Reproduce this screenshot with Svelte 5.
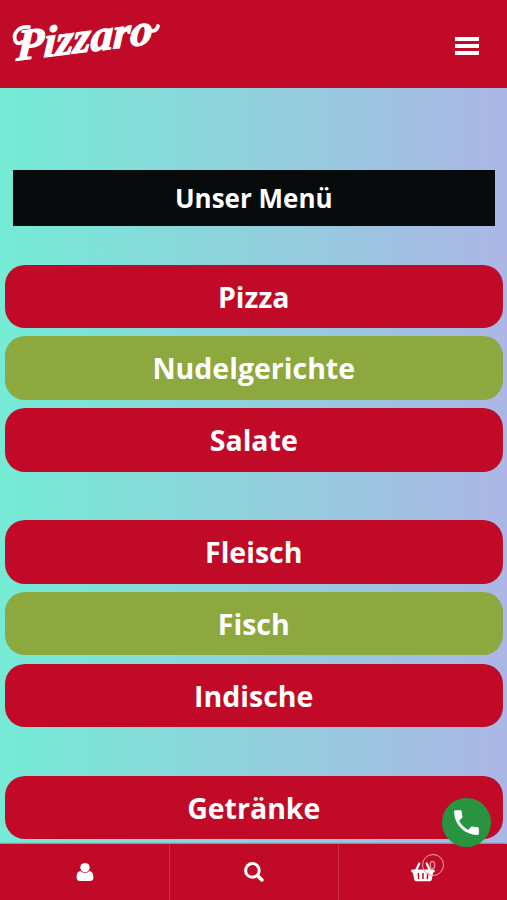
<script lang="ts">
	interface MenuItem {
		label: string;
		tone: 'red' | 'green';
	}

	const groups: MenuItem[][] = [
		[
			{ label: 'Pizza', tone: 'red' },
			{ label: 'Nudelgerichte', tone: 'green' },
			{ label: 'Salate', tone: 'red' }
		],
		[
			{ label: 'Fleisch', tone: 'red' },
			{ label: 'Fisch', tone: 'green' },
			{ label: 'Indische', tone: 'red' }
		],
		[{ label: 'Getränke', tone: 'red' }]
	];

	let cartCount = $state(0);
</script>

<div class="page">
	<header class="header">
		<a class="logo" href="#home" aria-label="Pizzaro">
			<svg width="154" height="56" viewBox="0 0 154 56">
				<text class="logo__text" transform="translate(7 50.500) rotate(-7) skewX(-10)" textLength="137" lengthAdjust="spacingAndGlyphs">Pizzaro</text>
				<path class="logo__swash" d="M20 17C10 16 4 23 6 30c1.500 4 5 4 7 2" />
				<path class="logo__swash" d="M141 20c4 2 7 0 8-4" />
			</svg>
		</a>
		<button class="menu-toggle" aria-label="Menu">
			<span></span>
			<span></span>
			<span></span>
		</button>
	</header>

	<main class="content">
		<h1 class="title">Unser Menü</h1>
		{#each groups as group}
			<nav class="group">
				{#each group as item}
					<a class="item item--{item.tone}" href="#menu">{item.label}</a>
				{/each}
			</nav>
		{/each}
	</main>

	<a class="call" href="#call" aria-label="Call">
		<svg width="33" height="33" viewBox="0 0 24 24" fill="#fff">
			<path d="M6.62 10.79c1.44 2.83 3.76 5.14 6.59 6.59l2.2-2.2c.27-.27.67-.36 1.02-.24 1.12.37 2.33.57 3.57.57.55 0 1 .45 1 1V20c0 .55-.45 1-1 1-9.39 0-17-7.61-17-17 0-.55.45-1 1-1h3.5c.55 0 1 .45 1 1 0 1.25.2 2.45.57 3.57.11.35.03.74-.25 1.02l-2.2 2.2z" />
		</svg>
	</a>

	<footer class="tabbar">
		<a class="tab" href="#account" aria-label="Account">
			<svg width="18" height="20" viewBox="0 0 18 20" fill="#fff">
				<circle cx="9" cy="5.6" r="4.7" />
				<path d="M4.6 8.9C1.6 9.2.6 12 .6 15.500c0 2.300 1.300 3.500 3.200 3.500h10.400c1.900 0 3.200-1.200 3.200-3.500 0-3.500-1-6.300-4-6.600-1.200 1.200-2.700 1.900-4.400 1.900s-3.200-.7-4.400-1.900z" />
			</svg>
		</a>
		<a class="tab" href="#search" aria-label="Search">
			<svg width="20" height="20" viewBox="0 0 20 20" fill="none" stroke="#fff">
				<circle cx="8.400" cy="8.400" r="6.800" stroke-width="3" />
				<path d="M13.400 13.400l4.500 4.500" stroke-width="3.600" stroke-linecap="round" />
			</svg>
		</a>
		<a class="tab" href="#cart" aria-label="Cart">
			<span class="cart">
				<svg width="24" height="20" viewBox="0 0 24 20">
					<path d="M4.800 9L8.300 1.500M19.200 9L15.700 1.500" stroke="#fff" stroke-width="2.200" stroke-linecap="round" />
					<path d="M1.300 7.500h21.400c1.500 0 1.500 3 0 3h-.5l-1.500 7.300c-.2.900-.8 1.400-1.700 1.400H5c-.9 0-1.500-.5-1.700-1.400L1.800 10.500h-.5c-1.500 0-1.500-3 0-3z" fill="#fff" />
					<path d="M7.300 11.500l.4 5M12 11.500v5M16.700 11.500l-.4 5" stroke="#c00a27" stroke-width="1.500" stroke-linecap="round" />
				</svg>
				<span class="cart__count">{cartCount}</span>
			</span>
		</a>
	</footer>
</div>

<style>
	:global(body) {
		margin: 0;
	}
	.page {
		position: relative;
		height: 900px;
		overflow: hidden;
		display: flex;
		flex-direction: column;
		box-sizing: border-box;
		font-family: 'Open Sans', sans-serif;
		background: linear-gradient(90deg, #74ebd5, #acb6e5);
	}
	a {
		color: #fff;
		text-decoration: none;
	}
	svg {
		display: block;
	}

	.header {
		flex: none;
		display: flex;
		justify-content: space-between;
		height: 88px;
		padding: 10px 28px 0 9px;
		box-sizing: border-box;
		background: #c00a27;
	}
	.logo svg {
		overflow: visible;
	}
	.logo__text {
		font: italic 700 44px 'Liberation Serif', serif;
		fill: #fff;
		stroke: #fff;
		stroke-width: 1.2px;
	}
	.logo__swash {
		fill: none;
		stroke: #fff;
		stroke-width: 3.8px;
		stroke-linecap: round;
	}
	.menu-toggle {
		display: flex;
		flex-direction: column;
		gap: 3px;
		width: 24px;
		height: 19px;
		margin: 27px 0 0;
		padding: 0;
		border: 0;
		background: none;
	}
	.menu-toggle span {
		width: 24px;
		height: 4px;
		background: #fff;
	}

	.content {
		flex: 1;
		min-height: 0;
		overflow: hidden;
		padding: 82px 4.5px 0 5px;
	}
	.title {
		height: 55.500px;
		margin: 0 8px 39.300px;
		font-size: 26px;
		font-weight: 700;
		line-height: 57px;
		text-align: center;
		color: #fff;
		background: #080b0c;
	}
	.group {
		display: flex;
		flex-direction: column;
		gap: 8.300px;
		margin-bottom: 48.800px;
	}
	.item {
		height: 63.400px;
		border-radius: 20px;
		font-size: 28.500px;
		font-weight: 700;
		line-height: 64px;
		text-align: center;
	}
	.item--red {
		background: #c00a27;
	}
	.item--green {
		background: #8ca83e;
	}

	.call {
		position: absolute;
		right: 16px;
		bottom: 53px;
		z-index: 1;
		display: grid;
		place-items: center;
		width: 49px;
		height: 49px;
		border-radius: 50%;
		background: #289440;
	}

	.tabbar {
		flex: none;
		display: grid;
		grid-template-columns: repeat(3, 1fr);
		height: 56px;
		background: #c00a27;
		box-shadow: 0 0 2px rgba(0, 0, 0, 0.7);
	}
	.tab {
		display: grid;
		place-items: center;
	}
	.tab + .tab {
		border-left: 1px solid #c8304a;
	}
	.cart {
		position: relative;
	}
	.cart__count {
		position: absolute;
		top: -8px;
		left: 10.500px;
		width: 20px;
		height: 20px;
		border: 1px solid #eda5b0;
		border-radius: 50%;
		font-size: 11px;
		line-height: 20px;
		text-align: center;
		color: #f3c4cb;
	}
</style>
